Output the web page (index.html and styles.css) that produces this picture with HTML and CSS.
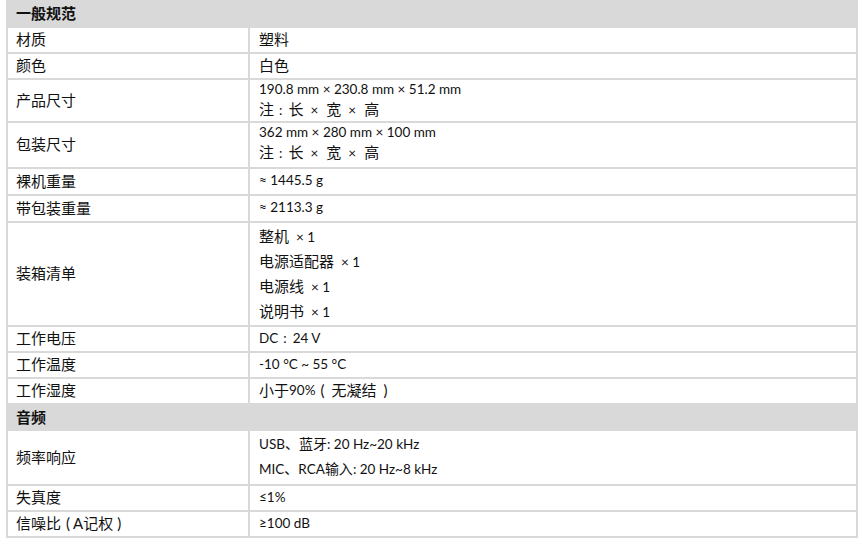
FILE: index.html
```html
<!DOCTYPE html>
<html lang="zh-CN">
<head>
<meta charset="utf-8">
<link rel="stylesheet" href="styles.css">
</head>
<body>
<div class="spec">
  <div class="section">一般规范</div>
  <div class="row"><div class="k">材质</div><div class="v cjk">塑料</div></div>
  <div class="row"><div class="k">颜色</div><div class="v cjk">白色</div></div>
  <div class="row multi dims"><div class="k">产品尺寸</div><div class="v"><div class="l1">190.8 mm × 230.8 mm × 51.2 mm</div><div class="l2 cjk">注<span class="colon">:</span>长<span class="mul">×</span>宽<span class="mul">×</span>高</div></div></div>
  <div class="row multi dims pk"><div class="k">包装尺寸</div><div class="v"><div class="l1">362 mm × 280 mm × 100 mm</div><div class="l2 cjk">注<span class="colon">:</span>长<span class="mul">×</span>宽<span class="mul">×</span>高</div></div></div>
  <div class="row tall"><div class="k">裸机重量</div><div class="v">≈ 1445.5 g</div></div>
  <div class="row tall"><div class="k">带包装重量</div><div class="v">≈ 2113.3 g</div></div>
  <div class="row multi list"><div class="k">装箱清单</div><div class="v cjk"><div class="li">整机<span class="x">× 1</span></div><div class="li">电源适配器<span class="x">× 1</span></div><div class="li">电源线<span class="x">× 1</span></div><div class="li">说明书<span class="x">× 1</span></div></div></div>
  <div class="row"><div class="k">工作电压</div><div class="v">DC<span class="colon">:</span>24 V</div></div>
  <div class="row"><div class="k">工作温度</div><div class="v">-10 °C ~ 55 °C</div></div>
  <div class="row"><div class="k">工作湿度</div><div class="v cjk">小于<span class="lat">90%</span><span class="po po-w">(</span>无凝结<span class="pc pc-w">)</span></div></div>
  <div class="section s2">音频</div>
  <div class="row multi freq"><div class="k">频率响应</div><div class="v"><div class="li">USB<span class="cj">、蓝牙</span>: 20 Hz~20 kHz</div><div class="li">MIC<span class="cj">、</span>RCA<span class="cj">输入</span>: 20 Hz~8 kHz</div></div></div>
  <div class="row"><div class="k">失真度</div><div class="v">≤1%</div></div>
  <div class="row"><div class="k">信噪比<span class="po">(</span><span class="lat lat-k">A</span>记权<span class="pc">)</span></div><div class="v">≥100 dB</div></div>
</div>
</body>
</html>
```

FILE: styles.css
```css
html, body {
  margin: 0;
  padding: 0;
  background: #ffffff;
}
body {
  font-family: Lato, "Noto Sans CJK SC", sans-serif;
  color: #111111;
}
.spec {
  margin-left: 6px;
  width: 852px;
  box-sizing: border-box;
  border-left: 2px solid #d9d9d9;
  border-right: 2px solid #d9d9d9;
}
.section {
  background: #d9d9d9;
  height: 28px;
  line-height: 25px;
  font-family: "Noto Sans CJK SC", sans-serif;
  font-weight: 700;
  font-size: 15px;
  margin-left: -2px;
  margin-right: -2px;
  padding-left: 10px;
}
.section.s2 {
  height: 26px;
  line-height: 24px;
}
.row {
  display: grid;
  grid-template-columns: 242px 1fr;
  border-bottom: 2px solid #d9d9d9;
  height: 24px;
}
.row.tall { height: 25px; }
.row.multi { height: auto; }
.k {
  border-right: 2px solid #d9d9d9;
  padding-left: 8px;
  padding-bottom: 3px;
  display: flex;
  align-items: center;
  font-family: "Noto Sans CJK SC", sans-serif;
  font-size: 15px;
  white-space: pre;
}
.v {
  padding-left: 9px;
  padding-bottom: 3px;
  display: flex;
  align-items: center;
  font-size: 13.5px;
  white-space: pre;
}
.cjk {
  font-family: "Noto Sans CJK SC", sans-serif;
  font-size: 15px;
}
.cj {
  font-family: "Noto Sans CJK SC", sans-serif;
  font-size: 14px;
}
.lat {
  font-family: Lato, sans-serif;
  font-size: 13.5px;
}
.lat-k {
  font-size: 15px;
}
.po, .pc {
  font-family: Lato, sans-serif;
  font-size: 15px;
}
.po { margin: 0 3px 0 5px; }
.pc { margin: 0 0 0 4px; }
.po-w { margin: 0 7px 0 5px; }
.pc-w { margin: 0 0 0 7px; }
.colon {
  font-family: Lato, sans-serif;
  font-size: 13.5px;
  margin: 0 6px 0 5px;
}
.mul {
  font-family: Lato, sans-serif;
  font-size: 13.5px;
  margin: 0 8px 0 7px;
}
.x {
  font-family: Lato, sans-serif;
  font-size: 13.5px;
  margin-left: 7px;
}
.multi .v {
  flex-direction: column;
  align-items: flex-start;
  justify-content: flex-start;
  padding-bottom: 0;
}
.dims .v { height: 41px; }
.dims.pk .v { height: 44px; }
.dims .l1 { height: 18px; line-height: 18px; }
.dims .l2 { height: 22px; line-height: 22px; }
.li {
  height: 25px;
  line-height: 25px;
}
.list .v { height: 102px; }
.freq .v { height: 53px; }
```
